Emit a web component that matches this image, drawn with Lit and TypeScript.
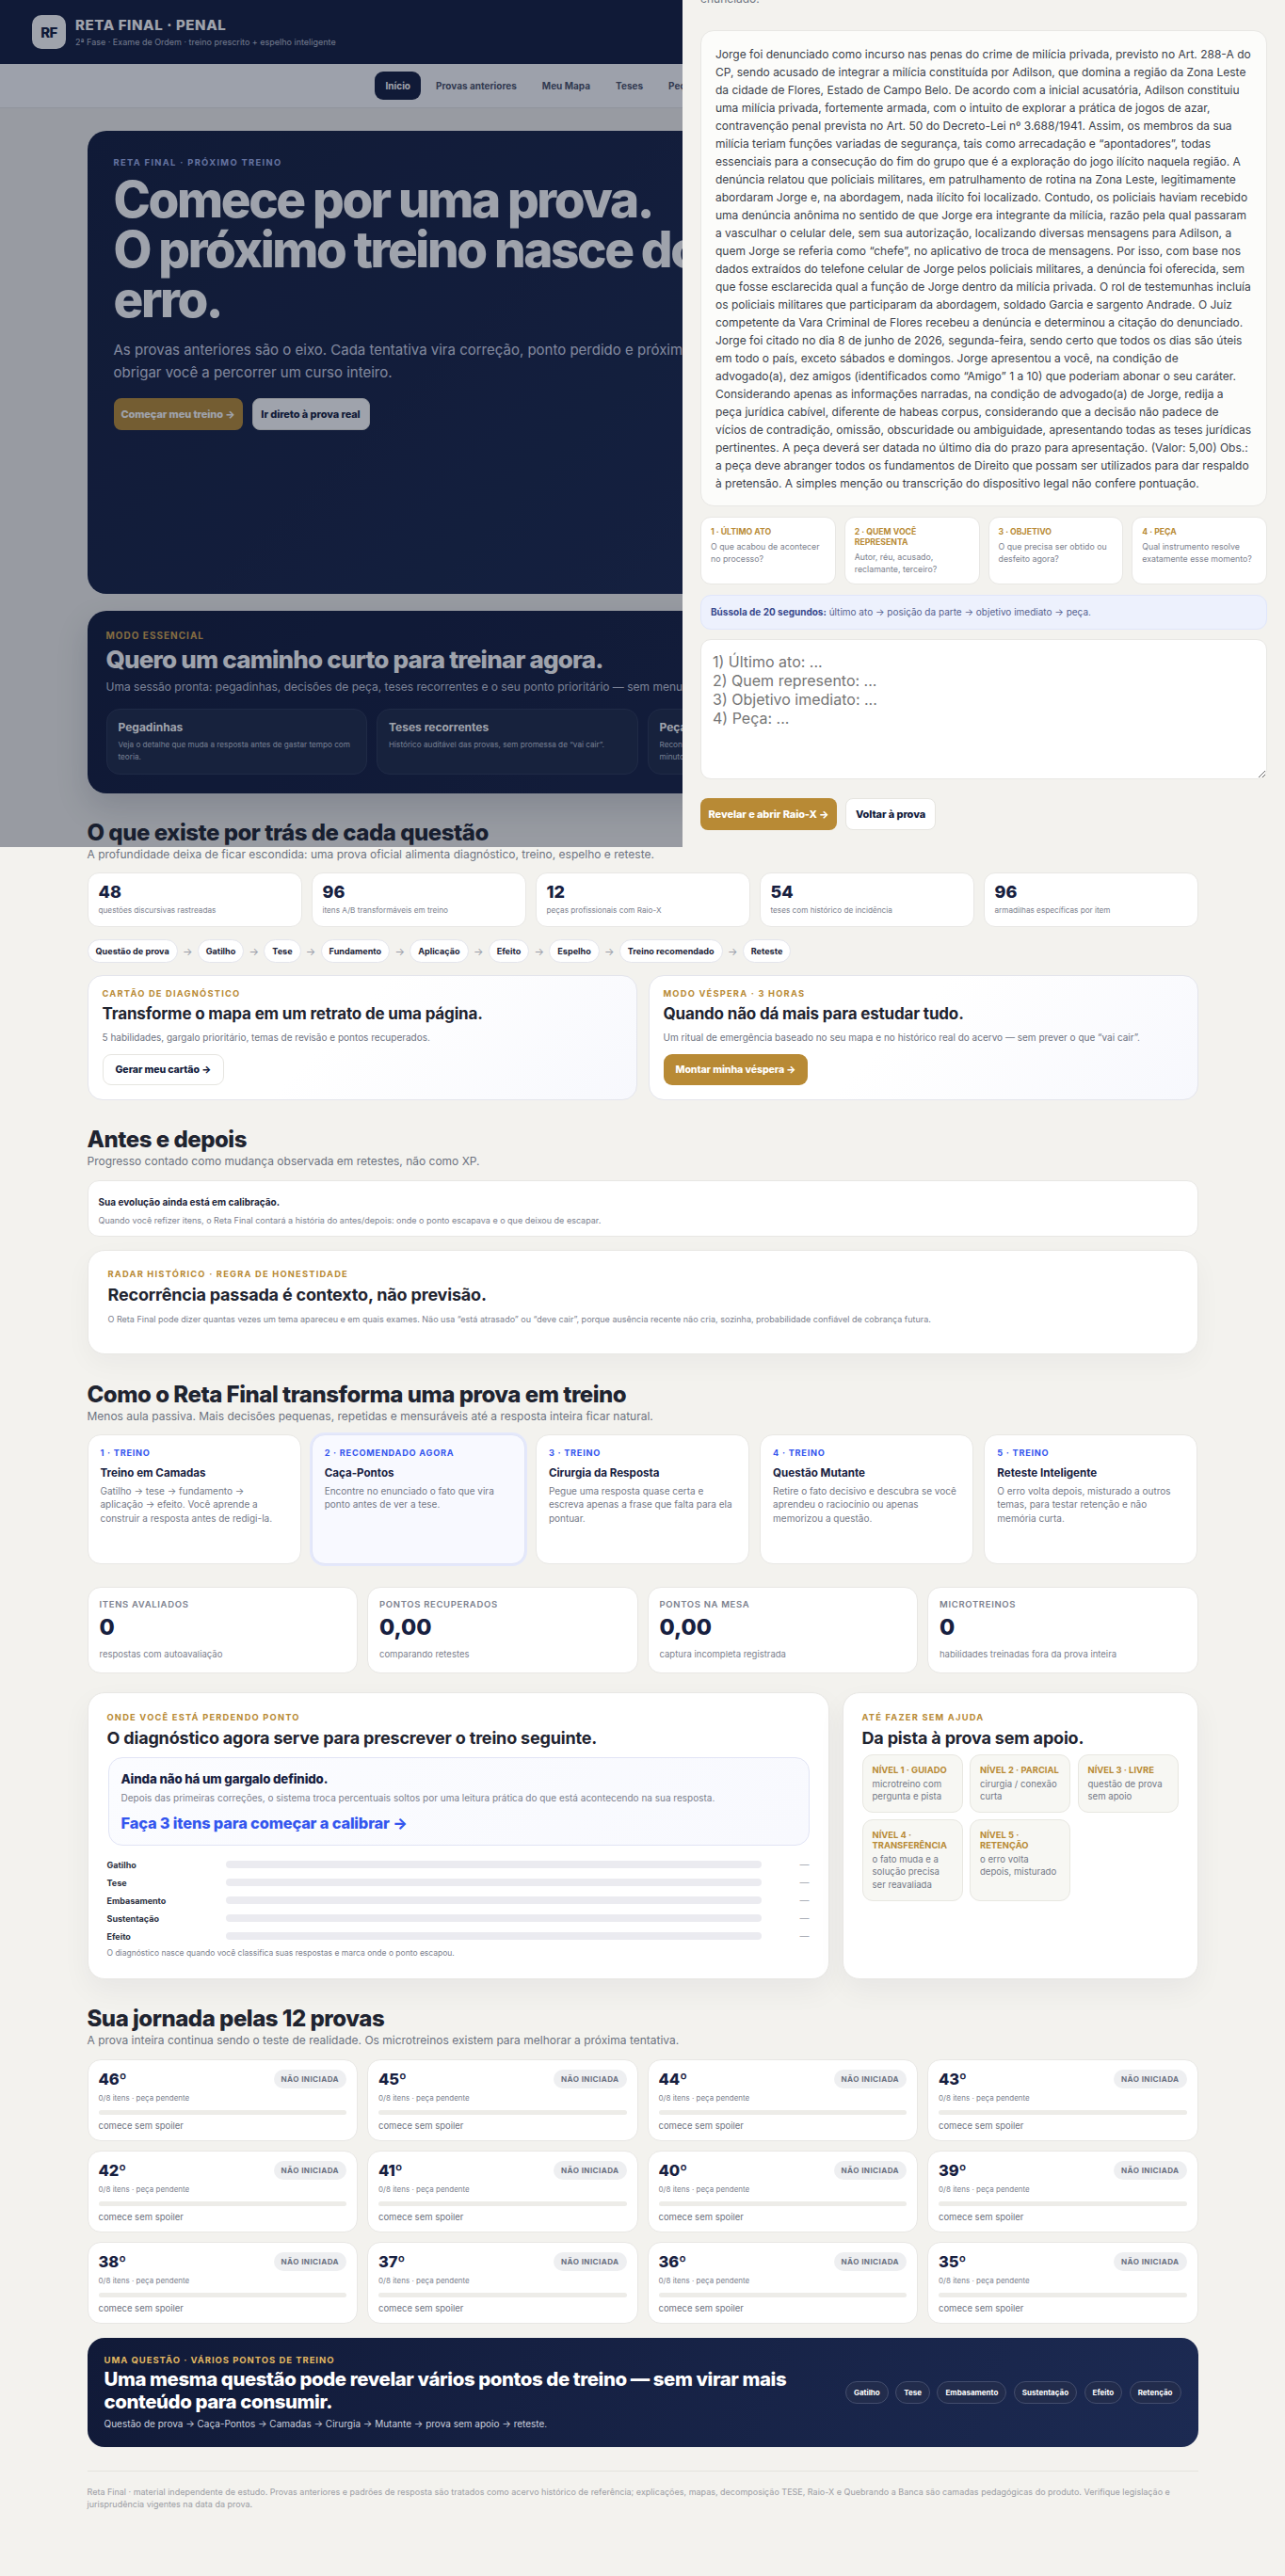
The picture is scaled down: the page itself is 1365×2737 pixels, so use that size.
import { LitElement, html, css } from "lit";
import { customElement } from "lit/decorators.js";

const NAV = ["Início", "Provas anteriores", "Meu Mapa", "Teses", "Peças", "Espelho"];
const ESSENTIAL = [
  ["Pegadinhas", "Veja o detalhe que muda a resposta antes de gastar tempo com teoria."],
  ["Teses recorrentes", "Histórico auditável das provas, sem promessa de “vai cair”."],
  ["Peça certa", "Reconheça o cabimento pelo último ato do processo em poucos minutos de treino."],
  ["Seu ponto", "Treine primeiro a habilidade que mais derruba a sua nota."],
];
const STATS = [
  ["48", "questões discursivas rastreadas"],
  ["96", "itens A/B transformáveis em treino"],
  ["12", "peças profissionais com Raio-X"],
  ["54", "teses com histórico de incidência"],
  ["96", "armadilhas específicas por item"],
];
const CHAIN = ["Questão de prova", "Gatilho", "Tese", "Fundamento", "Aplicação", "Efeito", "Espelho", "Treino recomendado", "Reteste"];
const TRAIN = [
  ["1 · TREINO", "Treino em Camadas", "Gatilho → tese → fundamento → aplicação → efeito. Você aprende a construir a resposta antes de redigi-la."],
  ["2 · RECOMENDADO AGORA", "Caça-Pontos", "Encontre no enunciado o fato que vira ponto antes de ver a tese."],
  ["3 · TREINO", "Cirurgia da Resposta", "Pegue uma resposta quase certa e escreva apenas a frase que falta para ela pontuar."],
  ["4 · TREINO", "Questão Mutante", "Retire o fato decisivo e descubra se você aprendeu o raciocínio ou apenas memorizou a questão."],
  ["5 · TREINO", "Reteste Inteligente", "O erro volta depois, misturado a outros temas, para testar retenção e não memória curta."],
];
const METRICS = [
  ["ITENS AVALIADOS", "0", "respostas com autoavaliação"],
  ["PONTOS RECUPERADOS", "0,00", "comparando retestes"],
  ["PONTOS NA MESA", "0,00", "captura incompleta registrada"],
  ["MICROTREINOS", "0", "habilidades treinadas fora da prova inteira"],
];
const SKILLS = ["Gatilho", "Tese", "Embasamento", "Sustentação", "Efeito"];
const LEVELS = [
  ["NÍVEL 1 · GUIADO", "microtreino com pergunta e pista"],
  ["NÍVEL 2 · PARCIAL", "cirurgia / conexão curta"],
  ["NÍVEL 3 · LIVRE", "questão de prova sem apoio"],
  ["NÍVEL 4 · TRANSFERÊNCIA", "o fato muda e a solução precisa ser reavaliada"],
  ["NÍVEL 5 · RETENÇÃO", "o erro volta depois, misturado"],
];
const EXAMS = ["46º", "45º", "44º", "43º", "42º", "41º", "40º", "39º", "38º", "37º", "36º", "35º"];
const BANNER_PILLS = ["Gatilho", "Tese", "Embasamento", "Sustentação", "Efeito", "Retenção"];
const STEPS = [
  ["1 · ÚLTIMO ATO", "O que acabou de acontecer no processo?"],
  ["2 · QUEM VOCÊ REPRESENTA", "Autor, réu, acusado, reclamante, terceiro?"],
  ["3 · OBJETIVO", "O que precisa ser obtido ou desfeito agora?"],
  ["4 · PEÇA", "Qual instrumento resolve exatamente esse momento?"],
];
const STATEMENT = "Jorge foi denunciado como incurso nas penas do crime de milícia privada, previsto no Art. 288-A do CP, sendo acusado de integrar a milícia constituída por Adilson, que domina a região da Zona Leste da cidade de Flores, Estado de Campo Belo. De acordo com a inicial acusatória, Adilson constituiu uma milícia privada, fortemente armada, com o intuito de explorar a prática de jogos de azar, contravenção penal prevista no Art. 50 do Decreto-Lei nº 3.688/1941. Assim, os membros da sua milícia teriam funções variadas de segurança, tais como arrecadação e “apontadores”, todas essenciais para a consecução do fim do grupo que é a exploração do jogo ilícito naquela região. A denúncia relatou que policiais militares, em patrulhamento de rotina na Zona Leste, legitimamente abordaram Jorge e, na abordagem, nada ilícito foi localizado. Contudo, os policiais haviam recebido uma denúncia anônima no sentido de que Jorge era integrante da milícia, razão pela qual passaram a vasculhar o celular dele, sem sua autorização, localizando diversas mensagens para Adilson, a quem Jorge se referia como “chefe”, no aplicativo de troca de mensagens. Por isso, com base nos dados extraídos do telefone celular de Jorge pelos policiais militares, a denúncia foi oferecida, sem que fosse esclarecida qual a função de Jorge dentro da milícia privada. O rol de testemunhas incluía os policiais militares que participaram da abordagem, soldado Garcia e sargento Andrade. O Juiz competente da Vara Criminal de Flores recebeu a denúncia e determinou a citação do denunciado. Jorge foi citado no dia 8 de junho de 2026, segunda-feira, sendo certo que todos os dias são úteis em todo o país, exceto sábados e domingos. Jorge apresentou a você, na condição de advogado(a), dez amigos (identificados como “Amigo” 1 a 10) que poderiam abonar o seu caráter. Considerando apenas as informações narradas, na condição de advogado(a) de Jorge, redija a peça jurídica cabível, diferente de habeas corpus, considerando que a decisão não padece de vícios de contradição, omissão, obscuridade ou ambiguidade, apresentando todas as teses jurídicas pertinentes. A peça deverá ser datada no último dia do prazo para apresentação. (Valor: 5,00) Obs.: a peça deve abranger todos os fundamentos de Direito que possam ser utilizados para dar respaldo à pretensão. A simples menção ou transcrição do dispositivo legal não confere pontuação.";

@customElement("app-root")
export class AppRoot extends LitElement {
  static styles = css`
    :host { display: block; position: relative; height: 2737px; overflow: hidden; background: #f3f2ee; color: #1f2430; font-family: Inter, "Noto Sans", sans-serif; }
    * { box-sizing: border-box; margin: 0; padding: 0; }
    .top { height: 68px; background: #121b3c; display: flex; align-items: center; gap: 10px; padding: 0 34px; }
    .logo { width: 36px; height: 36px; border-radius: 10px; background: #fff; color: #121b3c; display: flex; align-items: center; justify-content: center; font-size: 15px; font-weight: 800; letter-spacing: -0.5px; }
    .brand b { display: block; color: #fff; font-size: 15px; line-height: 18px; font-weight: 800; letter-spacing: 0.6px; }
    .brand span { display: block; color: #b6bbcc; font-size: 9px; line-height: 13px; margin-top: 2px; }
    .nav { height: 47px; background: #fcfcfd; border-bottom: 1px solid #e6e6e6; padding: 8px 0 0 398px; display: flex; gap: 4px; white-space: nowrap; overflow: hidden; }
    .nav a { height: 30px; line-height: 30px; padding: 0 11.5px; border-radius: 9px; font-size: 10px; font-weight: 700; color: #4a5068; }
    .nav a.on { background: #121b3c; color: #fff; }
    .wrap { width: 1180px; margin: 0 auto; padding-top: 24px; }
    .hero { height: 492px; border-radius: 20px; background: linear-gradient(135deg, #121c3c, #1c2a52); padding: 28px; color: #fff; overflow: hidden; }
    .hero .eye { font-size: 9.4px; line-height: 11px; font-weight: 700; letter-spacing: 0.14em; color: #9fb0ea; }
    .hero h1 { margin-top: 8px; font-size: 53px; line-height: 53px; font-weight: 800; letter-spacing: -0.045em; width: 690px; white-space: nowrap; }
    .hero p { margin-top: 15px; font-size: 15px; line-height: 24px; color: #cfd4e6; width: 730px; }
    .btns { margin-top: 15px; display: flex; gap: 10px; }
    .btn { height: 34px; border-radius: 8px; display: inline-flex; align-items: center; justify-content: center; font-size: 11px; font-weight: 800; white-space: nowrap; letter-spacing: -0.1px; }
    .gold { background: #b88a35; color: #fff; }
    .white { background: #fff; color: #121b3c; border: 1px solid #e6e5e0; }
    .essential { margin-top: 18px; height: 194px; border-radius: 20px; background: linear-gradient(135deg, #101939, #182348); padding: 20px; color: #fff; box-shadow: 0 14px 34px rgba(16,24,48,.16); overflow: hidden; }
    .essential .eye { font-size: 10px; line-height: 12px; font-weight: 700; letter-spacing: 0.1em; color: #d4a64e; }
    .essential h2 { margin-top: 6px; font-size: 26px; line-height: 28px; font-weight: 800; letter-spacing: -0.03em; }
    .essential > p { margin-top: 6px; font-size: 12px; line-height: 18px; color: #c3c8da; white-space: nowrap; }
    .egrid { margin-top: 14px; display: grid; grid-template-columns: repeat(4, 1fr); gap: 10px; }
    .ecard { height: 70px; border-radius: 14px; background: #1d2846; border: 1px solid #2b3656; padding: 11px 12px; }
    .ecard b { display: block; font-size: 12px; line-height: 16px; font-weight: 700; color: #fff; }
    .ecard span { display: block; margin-top: 3.5px; font-size: 8.2px; line-height: 13px; color: #bcc2d4; }
    .sec { font-size: 24px; line-height: 30px; font-weight: 800; letter-spacing: -0.02em; color: #1f2430; }
    .sub { font-size: 12px; line-height: 16px; color: #6d7280; }
    .stats { margin-top: 11px; display: grid; grid-template-columns: repeat(5, 1fr); gap: 10px; }
    .stat { height: 58px; background: #fff; border: 1px solid #e8e7e4; border-radius: 12px; padding: 9px 11px; }
    .stat b { display: block; font-size: 18px; line-height: 22px; font-weight: 800; color: #172040; }
    .stat span { display: block; margin-top: 2px; font-size: 8.2px; line-height: 12px; color: #7b808d; }
    .chain { margin-top: 13px; display: flex; align-items: center; white-space: nowrap; }
    .chain b { height: 25px; line-height: 23px; padding: 0 8px; background: #fff; border: 1px solid #e4e5ec; border-radius: 13px; font-size: 9.1px; font-weight: 700; color: #1c2338; }
    .chain i { width: 21px; text-align: center; font-style: normal; font-size: 11px; color: #9a9da8; }
    .duo { margin-top: 13px; display: grid; grid-template-columns: 1fr 1fr; gap: 12px; }
    .duo > div { height: 133px; background: linear-gradient(135deg, #fff 45%, #f7f8fd); border: 1px solid #e4e5ec; border-radius: 16px; padding: 13px 15px; }
    .kick { font-size: 9.3px; line-height: 12px; font-weight: 700; letter-spacing: 0.13em; color: #b88a35; }
    .duo h3 { margin-top: 4px; font-size: 17px; line-height: 22px; font-weight: 700; letter-spacing: -0.01em; color: #1f2430; }
    .duo p { margin-top: 7px; font-size: 10px; line-height: 14px; color: #6d7280; }
    .duo .btn { margin-top: 11px; padding: 0 13px; height: 33px; border-radius: 9px; font-size: 10.6px; }
    .note { margin-top: 12px; height: 60px; background: #fff; border: 1px solid #e8e7e4; border-radius: 12px; padding: 15px 11px; }
    .note b { display: block; font-size: 10px; line-height: 14px; font-weight: 700; color: #1c2338; }
    .note span { display: block; margin-top: 7px; font-size: 9px; line-height: 12px; color: #7b808d; }
    .radar { margin-top: 14px; height: 111px; background: #fff; border: 1px solid #e8e7e4; border-radius: 18px; padding: 19px 21px; box-shadow: 0 10px 28px rgba(20,24,50,.04); }
    .radar h3 { margin-top: 4px; font-size: 18px; line-height: 24px; font-weight: 700; color: #1f2430; letter-spacing: -0.01em; }
    .radar p { margin-top: 7px; font-size: 9px; line-height: 14px; color: #7b808d; }
    .train { margin-top: 11px; display: grid; grid-template-columns: repeat(5, 1fr); gap: 11px; }
    .tc { height: 138px; background: #fff; border: 1px solid #e8e7e4; border-radius: 14px; padding: 13px 13px; }
    .tc.rec { background: #f8f9ff; border-color: #dfe3f6; box-shadow: 0 0 0 2px #e4e8fb; }
    .tc em { display: block; font-style: normal; font-size: 9.2px; line-height: 12px; font-weight: 700; letter-spacing: 0.08em; color: #3355ee; }
    .tc b { display: block; margin-top: 6.5px; font-size: 11.6px; line-height: 17px; font-weight: 700; color: #172040; }
    .tc span { display: block; margin-top: 3px; font-size: 10px; line-height: 14.5px; color: #737886; }
    .metrics { margin-top: 24px; display: grid; grid-template-columns: repeat(4, 1fr); gap: 10px; }
    .m { height: 92px; background: #fff; border: 1px solid #e8e7e4; border-radius: 14px; padding: 12px 12px; }
    .m em { display: block; font-style: normal; font-size: 9.5px; line-height: 12px; font-weight: 600; letter-spacing: 0.07em; color: #7b808d; }
    .m b { display: block; margin-top: 3px; font-size: 23.5px; line-height: 30px; font-weight: 800; color: #172040; }
    .m span { display: block; margin-top: 8px; font-size: 9.5px; line-height: 12px; color: #7b808d; }
    .panels { margin-top: 20px; display: grid; grid-template-columns: 1fr 378px; gap: 14px; }
    .panel { height: 305px; background: #fff; border: 1px solid #e8e7e4; border-radius: 18px; padding: 20px 20px; box-shadow: 0 12px 30px rgba(20,24,50,.05); }
    .panel h3 { margin-top: 4px; font-size: 18px; line-height: 24px; font-weight: 700; color: #1f2430; letter-spacing: -0.01em; }
    .gap { margin-top: 8px; height: 94px; margin-left: 1px; border: 1px solid #e1e4f5; border-radius: 15px; background: linear-gradient(135deg, #fbfcff, #f8f9fe); padding: 12.5px 13px; }
    .gap b { display: block; font-size: 13.3px; line-height: 19px; font-weight: 800; letter-spacing: -0.01em; color: #172040; }
    .gap span { display: block; margin-top: 3.5px; font-size: 10px; line-height: 14px; color: #7b808d; }
    .gap a { display: block; margin-top: 8px; font-size: 16.4px; line-height: 24px; font-weight: 800; letter-spacing: -0.01em; color: #3355ee; }
    .bars { margin-top: 10.5px; }
    .bar { height: 19px; display: grid; grid-template-columns: 126px 1fr 51px; align-items: center; font-size: 9px; font-weight: 700; color: #2b3040; }
    .bar i { display: block; height: 8px; border-radius: 4px; background: #ebebf0; }
    .bar u { text-decoration: none; text-align: right; font-weight: 400; color: #9a9da8; font-size: 10px; }
    .pnote { margin-top: 1.5px; font-size: 8.5px; line-height: 14px; color: #7b808d; }
    .levels { margin-top: 5px; display: grid; grid-template-columns: repeat(3, 1fr); gap: 7px 7.5px; }
    .lv { background: #f7f7f3; border: 1px solid #e8e7e1; border-radius: 11px; padding: 9.5px 10px; }
    .lv b { display: block; font-size: 9.4px; line-height: 11px; font-weight: 700; color: #b88a35; }
    .lv span { display: block; margin-top: 3px; font-size: 9.6px; line-height: 13.5px; color: #737886; }
    .grid4 { margin-top: 12px; display: grid; grid-template-columns: repeat(4, 1fr); gap: 10px; }
    .ex { height: 87px; background: #fff; border: 1px solid #e8e7e4; border-radius: 14px; padding: 10px 11px; }
    .ex .row { display: flex; align-items: center; justify-content: space-between; height: 20px; }
    .ex .row b { font-size: 16.5px; font-weight: 800; color: #172040; letter-spacing: -0.01em; }
    .ex .row em { font-style: normal; height: 20px; line-height: 20px; padding: 0 8px; border-radius: 10px; background: #eeeff1; font-size: 8.1px; font-weight: 700; letter-spacing: 0.05em; color: #6a7080; }
    .ex .meta { margin-top: 4px; font-size: 8px; line-height: 12px; color: #7b808d; }
    .ex .track { margin-top: 7px; height: 5px; border-radius: 3px; background: #edece8; }
    .ex .hint { margin-top: 6px; font-size: 9.5px; line-height: 12px; color: #6d7280; }
    .banner { margin-top: 15px; height: 116px; border-radius: 18px; background: linear-gradient(110deg, #111a38, #1c2a52); padding: 18px; color: #fff; display: flex; align-items: center; justify-content: space-between; }
    .banner .eye { font-size: 9.5px; line-height: 12px; font-weight: 700; letter-spacing: 0.1em; color: #e2b862; }
    .banner h2 { margin-top: 2px; width: 760px; font-size: 20.4px; line-height: 24px; font-weight: 800; letter-spacing: -0.02em; }
    .banner p { margin-top: 4px; font-size: 10px; line-height: 14px; color: #c9cedd; }
    .bp { display: flex; gap: 7.5px; flex: none; }
    .bp b { height: 24px; line-height: 22px; padding: 0 8px; border: 1px solid #434d6d; background: #222c4c; border-radius: 12px; font-size: 8px; font-weight: 700; color: #fff; }
    .foot { margin-top: 25px; border-top: 1px solid #e3e2dd; padding-top: 15px; font-size: 9px; line-height: 13px; color: #9a9ca3; }
    .dim { position: absolute; left: 0; top: 0; width: 1365px; height: 900px; background: rgba(16, 24, 48, 0.4); }
    .drawer { position: absolute; left: 725px; top: 0; width: 640px; height: 900px; background: #f3f2ee; overflow: hidden; padding: 0 19px; }
    .cut { margin-top: -9px; font-size: 12px; line-height: 16px; color: #6d7280; }
    .statement { margin-top: 25px; height: 506px; background: #fcfcfa; border: 1px solid #e8e7e4; border-radius: 14px; padding: 14.5px 15px; font-size: 12px; line-height: 19px; color: #3b3f4a; }
    .steps { margin-top: 11px; display: grid; grid-template-columns: repeat(4, 1fr); gap: 9px; }
    .step { height: 72px; background: #fff; border: 1px solid #e8e7e4; border-radius: 11px; padding: 10px 10px; }
    .step b { display: block; font-size: 8.7px; line-height: 11px; font-weight: 700; color: #b88a35; }
    .step span { display: block; margin-top: 3px; font-size: 8.8px; line-height: 13px; color: #7b808d; }
    .compass { margin-top: 11px; height: 37px; line-height: 35px; background: #edf1fd; border: 1px solid #e0e6fb; border-radius: 11px; padding: 0 10px; font-size: 10px; color: #56628f; }
    .compass b { color: #38488c; font-weight: 700; }
    textarea { display: block; margin-top: 10px; width: 100%; height: 149px; border: 1px solid #e8e7e4; border-radius: 11px; background: #fff; padding: 13px 12px; font-family: Inter, sans-serif; font-size: 16px; line-height: 20px; outline: none; }
    textarea::placeholder { color: #757575; }
    .acts { margin-top: 20px; display: flex; gap: 9px; }
    .acts .gold { width: 145px; }
    .acts .white { width: 96px; }
  `;

  render() {
    return html`
      <header class="top">
        <div class="logo">RF</div>
        <div class="brand"><b>RETA FINAL · PENAL</b><span>2ª Fase · Exame de Ordem · treino prescrito + espelho inteligente</span></div>
      </header>
      <nav class="nav">${NAV.map((n, i) => html`<a class=${i === 0 ? "on" : ""}>${n}</a>`)}</nav>
      <main class="wrap">
        <section class="hero">
          <div class="eye">RETA FINAL · PRÓXIMO TREINO</div>
          <h1>Comece por uma prova.<br />O próximo treino nasce do<br />erro.</h1>
          <p>As provas anteriores são o eixo. Cada tentativa vira correção, ponto perdido e próximo treino, sem obrigar você a percorrer um curso inteiro.</p>
          <div class="btns">
            <a class="btn gold" style="width:137px">Começar meu treino →</a>
            <a class="btn white" style="width:125px">Ir direto à prova real</a>
          </div>
        </section>
        <section class="essential">
          <div class="eye">MODO ESSENCIAL</div>
          <h2>Quero um caminho curto para treinar agora.</h2>
          <p>Uma sessão pronta: pegadinhas, decisões de peça, teses recorrentes e o seu ponto prioritário — sem menu para escolher.</p>
          <div class="egrid">${ESSENTIAL.map((e) => html`<div class="ecard"><b>${e[0]}</b><span>${e[1]}</span></div>`)}</div>
        </section>

        <h2 class="sec" style="margin-top:27px">O que existe por trás de cada questão</h2>
        <p class="sub">A profundidade deixa de ficar escondida: uma prova oficial alimenta diagnóstico, treino, espelho e reteste.</p>
        <div class="stats">${STATS.map((s) => html`<div class="stat"><b>${s[0]}</b><span>${s[1]}</span></div>`)}</div>
        <div class="chain">${CHAIN.map((c, i) => html`${i ? html`<i>→</i>` : ""}<b>${c}</b>`)}</div>
        <div class="duo">
          <div>
            <div class="kick">CARTÃO DE DIAGNÓSTICO</div>
            <h3>Transforme o mapa em um retrato de uma página.</h3>
            <p>5 habilidades, gargalo prioritário, temas de revisão e pontos recuperados.</p>
            <a class="btn white">Gerar meu cartão →</a>
          </div>
          <div>
            <div class="kick">MODO VÉSPERA · 3 HORAS</div>
            <h3>Quando não dá mais para estudar tudo.</h3>
            <p>Um ritual de emergência baseado no seu mapa e no histórico real do acervo — sem prever o que “vai cair”.</p>
            <a class="btn gold">Montar minha véspera →</a>
          </div>
        </div>

        <h2 class="sec" style="margin-top:27px">Antes e depois</h2>
        <p class="sub">Progresso contado como mudança observada em retestes, não como XP.</p>
        <div class="note"><b>Sua evolução ainda está em calibração.</b><span>Quando você refizer itens, o Reta Final contará a história do antes/depois: onde o ponto escapava e o que deixou de escapar.</span></div>
        <div class="radar">
          <div class="kick">RADAR HISTÓRICO · REGRA DE HONESTIDADE</div>
          <h3>Recorrência passada é contexto, não previsão.</h3>
          <p>O Reta Final pode dizer quantas vezes um tema apareceu e em quais exames. Não usa “está atrasado” ou “deve cair”, porque ausência recente não cria, sozinha, probabilidade confiável de cobrança futura.</p>
        </div>

        <h2 class="sec" style="margin-top:28px">Como o Reta Final transforma uma prova em treino</h2>
        <p class="sub">Menos aula passiva. Mais decisões pequenas, repetidas e mensuráveis até a resposta inteira ficar natural.</p>
        <div class="train">${TRAIN.map((t, i) => html`<div class="tc ${i === 1 ? "rec" : ""}"><em>${t[0]}</em><b>${t[1]}</b><span>${t[2]}</span></div>`)}</div>
        <div class="metrics">${METRICS.map((m) => html`<div class="m"><em>${m[0]}</em><b>${m[1]}</b><span>${m[2]}</span></div>`)}</div>
        <div class="panels">
          <div class="panel">
            <div class="kick">ONDE VOCÊ ESTÁ PERDENDO PONTO</div>
            <h3>O diagnóstico agora serve para prescrever o treino seguinte.</h3>
            <div class="gap">
              <b>Ainda não há um gargalo definido.</b>
              <span>Depois das primeiras correções, o sistema troca percentuais soltos por uma leitura prática do que está acontecendo na sua resposta.</span>
              <a>Faça 3 itens para começar a calibrar →</a>
            </div>
            <div class="bars">${SKILLS.map((s) => html`<div class="bar"><span>${s}</span><i></i><u>—</u></div>`)}</div>
            <p class="pnote">O diagnóstico nasce quando você classifica suas respostas e marca onde o ponto escapou.</p>
          </div>
          <div class="panel">
            <div class="kick">ATÉ FAZER SEM AJUDA</div>
            <h3>Da pista à prova sem apoio.</h3>
            <div class="levels">${LEVELS.map((l) => html`<div class="lv"><b>${l[0]}</b><span>${l[1]}</span></div>`)}</div>
          </div>
        </div>

        <h2 class="sec" style="margin-top:27px">Sua jornada pelas 12 provas</h2>
        <p class="sub">A prova inteira continua sendo o teste de realidade. Os microtreinos existem para melhorar a próxima tentativa.</p>
        <div class="grid4">${EXAMS.map((e) => html`
          <div class="ex">
            <div class="row"><b>${e}</b><em>NÃO INICIADA</em></div>
            <div class="meta">0/8 itens · peça pendente</div>
            <div class="track"></div>
            <div class="hint">comece sem spoiler</div>
          </div>`)}</div>
        <section class="banner">
          <div>
            <div class="eye">UMA QUESTÃO · VÁRIOS PONTOS DE TREINO</div>
            <h2>Uma mesma questão pode revelar vários pontos de treino — sem virar mais conteúdo para consumir.</h2>
            <p>Questão de prova → Caça-Pontos → Camadas → Cirurgia → Mutante → prova sem apoio → reteste.</p>
          </div>
          <div class="bp">${BANNER_PILLS.map((b) => html`<b>${b}</b>`)}</div>
        </section>
        <footer class="foot">Reta Final · material independente de estudo. Provas anteriores e padrões de resposta são tratados como acervo histórico de referência; explicações, mapas, decomposição TESE, Raio-X e Quebrando a Banca são camadas pedagógicas do produto. Verifique legislação e jurisprudência vigentes na data da prova.</footer>
      </main>

      <div class="dim"></div>
      <aside class="drawer">
        <p class="cut">enunciado:</p>
        <div class="statement">${STATEMENT}</div>
        <div class="steps">${STEPS.map((s) => html`<div class="step"><b>${s[0]}</b><span>${s[1]}</span></div>`)}</div>
        <div class="compass"><b>Bússola de 20 segundos:</b> último ato → posição da parte → objetivo imediato → peça.</div>
        <textarea placeholder=${"1) Último ato: ...\n2) Quem represento: ...\n3) Objetivo imediato: ...\n4) Peça: ..."}></textarea>
        <div class="acts">
          <a class="btn gold">Revelar e abrir Raio-X →</a>
          <a class="btn white">Voltar à prova</a>
        </div>
      </aside>
    `;
  }
}
